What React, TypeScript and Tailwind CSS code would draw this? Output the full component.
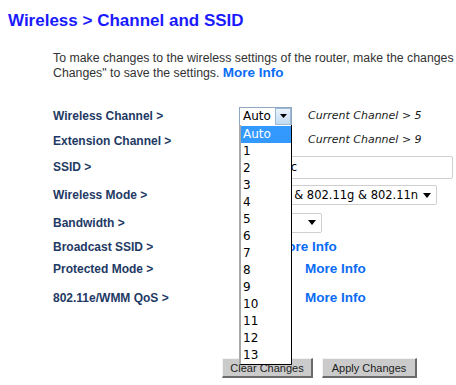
import React from "react";

function Tri() {
  return (
    <svg width="8" height="5" viewBox="0 0 8 5" className="block">
      <polygon points="0,0 8,0 4,5" fill="#000" />
    </svg>
  );
}

function Label({ children }: { children: React.ReactNode }) {
  return (
    <div className="w-[186px] shrink-0 text-[12px] font-bold text-[#1e3a64] leading-[14px]">
      {children}
    </div>
  );
}

function MoreInfo({ className = "" }: { className?: string }) {
  return (
    <span className={"text-[13.5px] font-bold text-[#0a6cf5] leading-[16px] " + className}>
      More Info
    </span>
  );
}

const dd = "font-['DejaVu_Sans',Verdana,sans-serif]";

export default function App() {
  const items = ["Auto", "1", "2", "3", "4", "5", "6", "7", "8", "9", "10", "11", "12", "13"];
  return (
    <div className="relative w-[456px] h-[385px] overflow-hidden bg-white font-['Liberation_Sans',Arial,sans-serif]">
      <h1 className="ml-[8px] pt-[11px] text-[17px] leading-[19px] font-bold text-[#1a1aff] whitespace-nowrap">
        Wireless &gt; Channel and SSID
      </h1>

      <div className="ml-[53px]">
        <p className="mt-[22px] text-[12.3px] leading-[13px] text-[#333333] whitespace-nowrap">
          To make changes to the wireless settings of the router, make the changes
          <br />
          Changes" to save the settings. <MoreInfo />
        </p>

        <div className="mt-[23px] flex flex-col">
          {/* Wireless Channel */}
          <div className="flex items-center h-[24px]">
            <Label>Wireless Channel &gt;</Label>
            <div className="flex w-[53px] h-[19px] border border-[#8ea6bf] bg-white">
              <span className={dd + " pl-[3px] text-[12px] leading-[17px] text-black"}>Auto</span>
              <div className="ml-auto w-[16px] h-full border border-[#9cbad8] bg-gradient-to-b from-[#eaf3fc] to-[#c2daf1] flex items-center justify-center">
                <svg width="7" height="4" viewBox="0 0 7 4" className="block">
                  <polygon points="0,0 7,0 3.5,4" fill="#000" />
                </svg>
              </div>
            </div>
            <span className={dd + " ml-[16px] italic text-[11px] text-[#1a1a1a]"}>Current Channel &gt; 5</span>
          </div>

          {/* Extension Channel */}
          <div className="flex items-center h-[25px]">
            <Label>Extension Channel &gt;</Label>
            <div className="w-[53px] h-[19px] border border-[#c8c8c8] bg-white" />
            <span className={dd + " ml-[16px] italic text-[11px] text-[#1a1a1a]"}>Current Channel &gt; 9</span>
          </div>

          {/* SSID */}
          <div className="flex items-center h-[28px]">
            <Label>SSID &gt;</Label>
            <div className={dd + " w-[214px] h-[23px] border border-[#cfcfcf] rounded-[2px] bg-white pl-[5px] text-[11.5px] leading-[21px] text-black"}>
              belkin.1c
            </div>
          </div>

          {/* Wireless Mode */}
          <div className="flex items-center h-[28px]">
            <Label>Wireless Mode &gt;</Label>
            <div className="flex items-center w-[198px] h-[20px] border border-[#cfcfcf] rounded-[2px] bg-white">
              <span className={dd + " pl-[3px] text-[11.5px] leading-[18px] text-black whitespace-nowrap"}>
                802.11b &amp; 802.11g &amp; 802.11n
              </span>
              <div className="ml-auto mr-[5px]">
                <Tri />
              </div>
            </div>
          </div>

          {/* Bandwidth */}
          <div className="flex items-center h-[27px]">
            <Label>Bandwidth &gt;</Label>
            <div className="flex items-center w-[83px] h-[20px] border border-[#cfcfcf] rounded-[2px] bg-white">
              <span className={dd + " pl-[3px] text-[11.5px] leading-[18px] text-black whitespace-nowrap"}>20MHz</span>
              <div className="ml-auto mr-[5px]">
                <Tri />
              </div>
            </div>
          </div>

          {/* Broadcast SSID */}
          <div className="flex items-center h-[21px]">
            <Label>Broadcast SSID &gt;</Label>
            <MoreInfo className="ml-[37px]" />
          </div>

          {/* Protected Mode */}
          <div className="flex items-center h-[24px]">
            <Label>Protected Mode &gt;</Label>
            <MoreInfo className="ml-[66px]" />
          </div>

          {/* 802.11e */}
          <div className="flex items-center h-[34px]">
            <Label>802.11e/WMM QoS &gt;</Label>
            <MoreInfo className="ml-[66px]" />
          </div>
        </div>

        <div className="mt-[43px] ml-[169px] flex gap-[9px]">
          <button className="w-[91px] h-[20px] bg-[#cbcbcb] border-t border-l border-[#f2f2f2] border-b-2 border-r-2 border-b-[#6a6a6a] border-r-[#6a6a6a] text-[11px] leading-[16px] text-[#222222]">
            Clear Changes
          </button>
          <button className="w-[95px] h-[20px] bg-[#cbcbcb] border-t border-l border-[#f2f2f2] border-b-2 border-r-2 border-b-[#6a6a6a] border-r-[#6a6a6a] text-[11px] leading-[16px] text-[#222222]">
            Apply Changes
          </button>
        </div>
      </div>

      {/* Open dropdown list */}
      <div className={dd + " absolute left-[239px] top-[125px] w-[53px] pt-[1px] bg-white border-l-2 border-l-[#a8a8a8] border-r border-r-black border-b border-b-black"}>
        {items.map((it, i) => (
          <div
            key={it}
            className={
              "h-[17px] pl-[2px] text-[12px] leading-[17px] " +
              (i === 0 ? "bg-[#3399ff] text-white" : "text-black")
            }
          >
            {it}
          </div>
        ))}
      </div>
    </div>
  );
}
